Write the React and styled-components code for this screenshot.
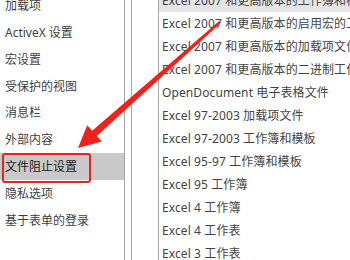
import React from "react";
import styled, { createGlobalStyle } from "styled-components";

const Global = createGlobalStyle`
  html, body { margin: 0; padding: 0; background: #fff; }
  body { width: 350px; height: 260px; overflow: hidden; }
  #root { width: 350px; height: 260px; }
`;

const Page = styled.div`
  position: relative;
  width: 350px;
  height: 260px;
  display: flex;
  overflow: hidden;
  background: #fff;
  font-family: "Noto Sans", "Noto Sans CJK SC", sans-serif;
  font-size: 12px;
  color: #3f3f3f;
`;

const Sidebar = styled.div`
  width: 124px;
  flex: none;
  border-right: 1px solid #a8a8a8;
  overflow: hidden;
`;

const SideList = styled.div`
  display: flex;
  flex-direction: column;
  margin-top: -8.5px;
`;

const SideItem = styled.div`
  position: relative;
  height: 26.875px;
  display: flex;
  align-items: center;
  padding-left: 5px;
  white-space: nowrap;
  background: ${(p) => (p.$selected ? "#c9c9c9" : "transparent")};
  color: ${(p) => (p.$selected ? "#222" : "#3f3f3f")};
`;

const Gutter = styled.div`
  width: 6px;
  flex: none;
  border-right: 1px solid #a8a8a8;
`;

const Spacer = styled.div`
  width: 26px;
  flex: none;
`;

const ListBox = styled.div`
  flex: 1;
  min-width: 0;
  border-left: 1px solid #a8a8a8;
  overflow: hidden;
`;

const Rows = styled.div`
  display: flex;
  flex-direction: column;
  margin-top: -11.5px;
`;

const Row = styled.div`
  height: 23.03px;
  display: flex;
  align-items: center;
  padding-left: 3px;
  white-space: nowrap;
  letter-spacing: 0.1px;
  background: ${(p) => (p.$active ? "#e5e5e5" : "transparent")};
  color: #444;
`;

const Highlight = styled.span`
  position: absolute;
  left: 2px;
  top: 0px;
  width: 89px;
  height: 30px;
  box-sizing: border-box;
  border: 2px solid #e8251c;
  border-radius: 3px;
  pointer-events: none;
`;

const Overlay = styled.svg`
  position: absolute;
  left: 0;
  top: 0;
  pointer-events: none;
`;

const sideItems = [
  "加载项",
  "ActiveX 设置",
  "宏设置",
  "受保护的视图",
  "消息栏",
  "外部内容",
  "文件阻止设置",
  "隐私选项",
  "基于表单的登录",
];

const fileTypes = [
  "Excel 2007 和更高版本的工作簿和模板",
  "Excel 2007 和更高版本的启用宏的工作簿和模板",
  "Excel 2007 和更高版本的加载项文件",
  "Excel 2007 和更高版本的二进制工作簿",
  "OpenDocument 电子表格文件",
  "Excel 97-2003 加载项文件",
  "Excel 97-2003 工作簿和模板",
  "Excel 95-97 工作簿和模板",
  "Excel 95 工作簿",
  "Excel 4 工作簿",
  "Excel 4 工作表",
  "Excel 3 工作表",
];

export default function App() {
  return (
    <>
      <Global />
      <Page>
        <Sidebar>
          <SideList>
            {sideItems.map((t, i) => (
              <SideItem key={t} $selected={i === 6}>
                {t}
                {i === 6 && <Highlight />}
              </SideItem>
            ))}
          </SideList>
        </Sidebar>
        <Gutter />
        <Spacer />
        <ListBox>
          <Rows>
            {fileTypes.map((t, i) => (
              <Row key={t} $active={i === 0}>
                {t}
              </Row>
            ))}
          </Rows>
        </ListBox>
        <Overlay width="350" height="260" viewBox="0 0 350 260">
          <polygon
            points="219.2,21.1 92.2,130.8 87.2,125.2 78,148 101.8,141.6 96.8,136 220.8,22.9"
            fill="#f0201a"
          />
        </Overlay>
      </Page>
    </>
  );
}
